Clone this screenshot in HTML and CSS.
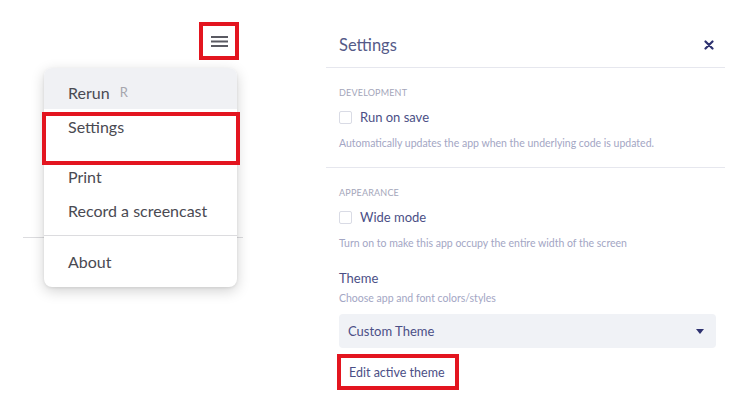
FILE: index.html
```html
<!DOCTYPE html>
<html>
<head>
<meta charset="utf-8">
<link rel="stylesheet" href="styles.css">
</head>
<body>
<div class="page">
  <div class="left">
    <div class="topbar">
      <div class="burger-box">
        <svg width="17" height="11" viewBox="0 0 17 11"><rect x="0" y="0" width="17" height="2" fill="#5a5a62"/><rect x="0" y="4.5" width="17" height="2" fill="#5a5a62"/><rect x="0" y="9" width="17" height="2" fill="#5a5a62"/></svg>
      </div>
    </div>
    <div class="page-line"></div>
    <div class="menu">
      <div class="item first">Rerun <span class="key">R</span></div>
      <div class="item marked">Settings</div>
      <div class="spacer"></div>
      <div class="item">Print</div>
      <div class="item">Record a screencast</div>
      <div class="divider"></div>
      <div class="item">About</div>
    </div>
  </div>
  <div class="panel">
    <div class="panel-head">
      <span class="title">Settings</span>
      <svg class="close" width="10" height="10" viewBox="0 0 10 10"><path d="M1.5 1.5 L8.5 8.5 M8.5 1.5 L1.5 8.5" stroke="#2e3270" stroke-width="2.2" stroke-linecap="round"/></svg>
    </div>
    <div class="section">
      <div class="label">DEVELOPMENT</div>
      <div class="check"><span class="box"></span><span>Run on save</span></div>
      <div class="desc">Automatically updates the app when the underlying code is updated.</div>
    </div>
    <div class="section">
      <div class="label">APPEARANCE</div>
      <div class="check"><span class="box"></span><span>Wide mode</span></div>
      <div class="desc">Turn on to make this app occupy the entire width of the screen</div>
      <div class="theme">Theme</div>
      <div class="desc tight">Choose app and font colors/styles</div>
      <div class="select"><span>Custom Theme</span><svg width="8" height="5" viewBox="0 0 8 5"><path d="M0 0 H8 L4 5 Z" fill="#2e3270"/></svg></div>
      <div class="edit">Edit active theme</div>
    </div>
  </div>
</div>
</body>
</html>
```
FILE: styles.css
```css
* { box-sizing: border-box; }
body {
  margin: 0;
  background: #fff;
  font-family: Lato, "Noto Sans", sans-serif;
}
.page {
  display: flex;
  width: 734px;
  height: 411px;
}
.left {
  position: relative;
  width: 326px;
}
.topbar {
  display: flex;
  justify-content: flex-end;
  padding: 22px 0 0 0;
  width: 239px;
}
.burger-box {
  width: 40px;
  height: 38px;
  border: 4px solid #e3151f;
  display: flex;
  align-items: center;
  justify-content: center;
}
.page-line {
  margin: 177px 0 0 23px;
  width: 220px;
  height: 1px;
  background: #dcdcdf;
}
.menu {
  position: absolute;
  left: 44px;
  top: 68px;
  width: 193px;
  height: 219px;
  background: #fff;
  border-radius: 8px;
  box-shadow: 0 4px 14px rgba(0,0,0,0.18), 0 1px 3px rgba(0,0,0,0.08);
  padding-bottom: 8px;
}
.item {
  height: 34px;
  display: flex;
  align-items: center;
  padding-left: 24px;
  font-size: 16px;
  color: #4a4a52;
}
.item.first {
  height: 41px;
  padding-top: 7px;
  background: #f0f1f4;
  border-radius: 8px 8px 0 0;
}
.key {
  font-size: 13px;
  color: #a6a6ad;
  margin-left: 10px;
}
.item.marked {
  position: relative;
  height: 35px;
}
.item.marked::after {
  content: "";
  position: absolute;
  left: -2px;
  right: -3px;
  top: 3px;
  height: 45px;
  border: 4px solid #e3151f;
}
.spacer { height: 15px; }
.divider {
  height: 1px;
  background: #dcdcdf;
  margin: 8px 0 8px 0;
}
.panel {
  width: 399px;
  display: flex;
  flex-direction: column;
}
.panel-head {
  height: 68px;
  border-bottom: 1px solid #e6e7ee;
  display: flex;
  align-items: center;
  justify-content: space-between;
  padding: 22px 11px 0 13px;
}
.title {
  font-size: 16.5px;
  color: #555a88;
}
.section {
  padding: 19px 13px 0 13px;
}
.section + .section {
  border-top: 1px solid #e6e7ee;
}
.label {
  font-size: 9px;
  color: #a4a6ba;
  letter-spacing: 0.2px;
  line-height: 12px;
}
.check {
  display: flex;
  align-items: center;
  gap: 8px;
  margin-top: 10px;
  font-size: 13px;
  color: #4b4f86;
  line-height: 16px;
}
.box {
  width: 13px;
  height: 13px;
  border: 1px solid #d9dbe5;
  border-radius: 2px;
  background: #fff;
}
.desc {
  margin-top: 11px;
  font-size: 10.5px;
  color: #a3a6c4;
  line-height: 14px;
  padding-bottom: 17px;
}
.section + .section .desc { padding-bottom: 0; }
.desc.tight { margin-top: 5px; }
.theme {
  margin-top: 20px;
  font-size: 13px;
  color: #4b4f86;
  line-height: 16px;
}
.select {
  margin-top: 9px;
  height: 34px;
  background: #f0f2f6;
  border-radius: 4px;
  display: flex;
  align-items: center;
  justify-content: space-between;
  padding: 0 12px 0 9px;
  font-size: 13px;
  color: #4b4f86;
  width: 377px;
}
.edit {
  margin-top: 6px;
  margin-left: -2px;
  width: 122px;
  height: 36px;
  border: 4px solid #e3151f;
  display: flex;
  align-items: center;
  padding-left: 8px;
  font-size: 12.5px;
  color: #4b4f86;
}
```
